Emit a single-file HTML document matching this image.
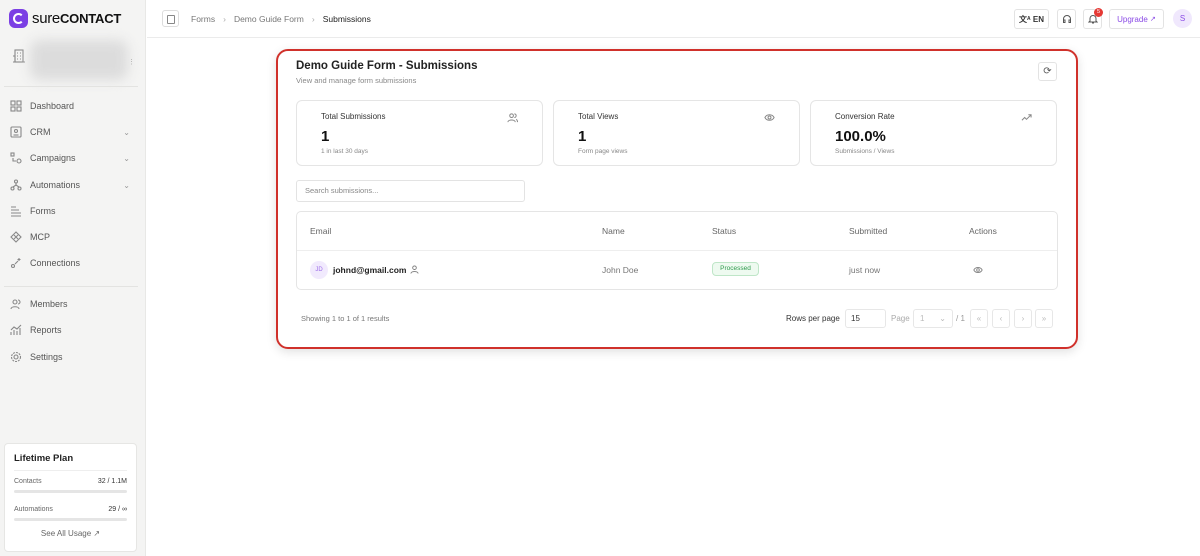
<!DOCTYPE html>
<html><head><meta charset="utf-8">
<style>
*{box-sizing:border-box;margin:0;padding:0}
body{width:1200px;height:556px;overflow:hidden;font-family:"Liberation Sans",sans-serif;background:#fff;color:#111;position:relative}
.sb{position:absolute;left:0;top:0;width:146px;height:556px;background:#f4f4f3;border-right:1px solid #e8e8e6}
.logo{position:absolute;left:9px;top:9px;display:flex;align-items:center}
.logo .c{width:19px;height:19px;border-radius:6px;background:#7b3fe4;position:relative}
.logo .c:after{content:"";position:absolute;left:4px;top:4px;width:7px;height:7px;border:2.5px solid #fff;border-radius:50%;border-right-color:transparent}
.logo .t{font-size:15px;margin-left:4px;letter-spacing:-0.3px;color:#111}
.logo b{font-size:13px;letter-spacing:-0.2px}
.acc{position:absolute;left:12px;top:48px}
.blur{position:absolute;left:30px;top:40px;width:98px;height:40px;background:#dcdcdc;filter:blur(6px);border-radius:10px}
.sep{position:absolute;left:4px;width:134px;border-top:1px solid #e3e3e1}
.nav{position:absolute;left:10px;font-size:9px;color:#555;display:flex;align-items:center;width:120px}
.nav svg{width:12px;height:12px;margin-right:8px;stroke:#888;fill:none;stroke-width:1.1}
.nav .ch{margin-left:auto;color:#999;font-size:8px}
.plan{position:absolute;left:4px;top:443px;width:133px;height:109px;background:#fff;border:1px solid #e6e6e4;border-radius:4px;padding:9px}
.plan h4{font-size:9.5px;font-weight:bold;color:#222;padding-bottom:6px;border-bottom:1px solid #eee}
.row{display:flex;justify-content:space-between;font-size:7px;color:#666;margin-top:7px}
.bar{height:3px;background:#e5e5e5;border-radius:2px;margin-top:5px}
.hdr{position:absolute;left:147px;top:0;right:0;height:38px;border-bottom:1px solid #ebebeb;background:#fff}
.bc{position:absolute;left:15px;top:10px;display:flex;align-items:center;font-size:8.5px;color:#777}
.bc .tog{width:17px;height:17px;border:1px solid #ddd;border-radius:3px;margin-right:12px;position:relative}
.bc .tog:after{content:"";position:absolute;left:4px;top:4px;width:6px;height:7px;border:1px solid #888;border-radius:1px}
.btn{position:absolute;top:9px;height:20px;border:1px solid #e3e3e3;border-radius:3px;background:#fff;font-size:8px;display:flex;align-items:center;justify-content:center}
.red{position:absolute;left:276px;top:49px;width:802px;height:300px;border:2.5px solid #d0312b;border-radius:12px;box-shadow:0 3px 10px rgba(0,0,0,.12)}
.ttl{position:absolute;left:296px;top:60px;font-size:11.5px;font-weight:bold;color:#222}
.sub{position:absolute;left:296px;top:76px;font-size:7.5px;color:#888}
.card{position:absolute;top:100px;width:247px;height:66px;border:1px solid #e5e5e5;border-radius:6px;background:#fff}
.card .l{position:absolute;left:24px;top:11px;font-size:8px;color:#333}
.card .v{position:absolute;left:24px;top:27px;font-size:15px;font-weight:bold;color:#111}
.card .s{position:absolute;left:24px;top:47px;font-size:6.5px;color:#888}
.card svg{position:absolute;right:24px;top:11px;width:11px;height:11px;stroke:#888;fill:none;stroke-width:1.1}
.search{position:absolute;left:296px;top:180px;width:229px;height:22px;border:1px solid #e3e3e3;border-radius:3px;font-size:7.5px;color:#888;padding:5px 8px}
.tbl{position:absolute;left:296px;top:211px;width:762px;height:79px;border:1px solid #e5e5e5;border-radius:5px}
.th{position:absolute;top:14px;font-size:8.5px;color:#666}
.td{position:absolute;top:53px;font-size:8.5px;color:#777}
.hl{position:absolute;left:0;right:0;top:38px;border-top:1px solid #eee}
.pg{position:absolute;top:309px;height:19px;border:1px solid #e7e7e7;border-radius:3px;font-size:8px;color:#bbb;display:flex;align-items:center;justify-content:center}
</style></head><body>
<div class="sb">
 <div class="logo"><div class="c"></div><span class="t">sure<b>CONTACT</b></span></div>
 <svg class="acc" width="14" height="16" viewBox="0 0 14 16" fill="none" stroke="#888" stroke-width="1.1"><rect x="3" y="2" width="8" height="12"/><path d="M1 14h12M1 8h2v6M5 5h1M8 5h1M5 8h1M8 8h1M5 11h1M8 11h1"/></svg>
 <div class="blur"></div>
 <div style="position:absolute;left:128px;top:58px;font-size:7px;color:#aaa">⋮</div>
 <div class="sep" style="top:86px"></div>
 <div class="nav" style="top:100px"><svg viewBox="0 0 12 12"><rect x="1" y="1" width="4" height="4"/><rect x="7" y="1" width="4" height="4"/><rect x="1" y="7" width="4" height="4"/><rect x="7" y="7" width="4" height="4"/></svg>Dashboard</div>
 <div class="nav" style="top:126px"><svg viewBox="0 0 12 12"><rect x="1" y="1" width="10" height="10" rx="1"/><circle cx="6" cy="5" r="1.5"/><path d="M3.5 9h5"/></svg>CRM<span class="ch">⌄</span></div>
 <div class="nav" style="top:152px"><svg viewBox="0 0 12 12"><rect x="1" y="1" width="3" height="3"/><circle cx="9" cy="9" r="2"/><path d="M3 6v3h3"/></svg>Campaigns<span class="ch">⌄</span></div>
 <div class="nav" style="top:179px"><svg viewBox="0 0 12 12"><circle cx="6" cy="2.5" r="1.5"/><circle cx="2.5" cy="9.5" r="1.5"/><circle cx="9.5" cy="9.5" r="1.5"/><path d="M6 4v2M3 8l3-2 3 2"/></svg>Automations<span class="ch">⌄</span></div>
 <div class="nav" style="top:205px"><svg viewBox="0 0 12 12"><path d="M1 2h5M1 5h8M1 8h10M1 11h10"/></svg>Forms</div>
 <div class="nav" style="top:231px"><svg viewBox="0 0 12 12"><path d="M6 1l5 5-5 5-5-5z"/><path d="M4 4l4 4M8 4l-4 4"/></svg>MCP</div>
 <div class="nav" style="top:257px"><svg viewBox="0 0 12 12"><circle cx="3" cy="9" r="1.5"/><path d="M5 7l3-3M9 1v3M7.5 2.5h3"/></svg>Connections</div>
 <div class="sep" style="top:286px"></div>
 <div class="nav" style="top:298px"><svg viewBox="0 0 12 12"><circle cx="5" cy="4" r="2"/><path d="M1 11c0-3 8-3 8 0M8 2a2 2 0 010 4"/></svg>Members</div>
 <div class="nav" style="top:324px"><svg viewBox="0 0 12 12"><path d="M1 11V8M4 11V6M7 11V7M10 11V4M1 6l3-3 3 2 4-4"/></svg>Reports</div>
 <div class="nav" style="top:351px"><svg viewBox="0 0 12 12"><circle cx="6" cy="6" r="2"/><circle cx="6" cy="6" r="4.5" stroke-dasharray="2 1"/></svg>Settings</div>
 <div class="plan"><h4>Lifetime Plan</h4>
  <div class="row"><span>Contacts</span><span style="color:#333">32 / 1.1M</span></div><div class="bar"></div>
  <div class="row" style="margin-top:13px"><span>Automations</span><span style="color:#333">29 / ∞</span></div><div class="bar"></div>
  <div style="text-align:center;font-size:8px;color:#666;margin-top:8px">See All Usage ↗</div></div>
</div>
<div class="hdr">
 <div class="bc"><div class="tog"></div>Forms<span style="margin:0 8px;color:#aaa">›</span>Demo Guide Form<span style="margin:0 8px;color:#aaa">›</span><span style="color:#222">Submissions</span></div>
</div>
<div class="btn" style="left:1014px;width:35px;font-weight:bold;color:#333">文<sub style="font-size:5px">A</sub>&nbsp;EN</div>
<div class="btn" style="left:1057px;width:19px;color:#555"><svg width="10" height="10" viewBox="0 0 10 10" fill="none" stroke="#555"><path d="M1.5 7V5a3.5 3.5 0 017 0v2M1.5 6h1.5v2.5H1.5zM7 6h1.5v2.5H7z"/></svg></div>
<div class="btn" style="left:1083px;width:19px"><svg width="10" height="10" viewBox="0 0 10 10" fill="none" stroke="#555"><path d="M2 7V4.5a3 3 0 016 0V7l1 1H1zM4 9h2"/></svg></div>
<div style="position:absolute;left:1094px;top:8px;width:9px;height:9px;border-radius:50%;background:#e53935;color:#fff;font-size:5.5px;text-align:center;line-height:9px">5</div>
<div class="btn" style="left:1109px;width:55px;color:#8b4be6">Upgrade&nbsp;<span style="font-size:7px">↗</span></div>
<div style="position:absolute;left:1173px;top:9px;width:19px;height:19px;border-radius:50%;background:#f0e8fd;color:#8b4be6;font-size:8px;text-align:center;line-height:19px">S</div>

<div class="red"></div>
<div class="ttl">Demo Guide Form - Submissions</div>
<div class="sub">View and manage form submissions</div>
<div class="btn" style="left:1038px;top:62px;width:19px;height:19px;font-size:10px;color:#555">⟳</div>

<div class="card" style="left:296px"><div class="l">Total Submissions</div><div class="v">1</div><div class="s">1 in last 30 days</div><svg viewBox="0 0 12 12"><circle cx="5" cy="4" r="2"/><path d="M1 11c0-3 8-3 8 0M8 2a2 2 0 010 4M10 8c1 .5 1.5 1.5 1.5 3"/></svg></div>
<div class="card" style="left:553px"><div class="l">Total Views</div><div class="v">1</div><div class="s">Form page views</div><svg viewBox="0 0 12 12"><path d="M1 6c2-4 8-4 10 0-2 4-8 4-10 0z"/><circle cx="6" cy="6" r="1.6"/></svg></div>
<div class="card" style="left:810px"><div class="l">Conversion Rate</div><div class="v">100.0%</div><div class="s">Submissions / Views</div><svg viewBox="0 0 12 12"><path d="M1 9l3-3 2 2 5-5M8 3h3v3"/></svg></div>

<div class="search">Search submissions...</div>
<div class="tbl">
 <div class="th" style="left:13px">Email</div><div class="th" style="left:305px">Name</div><div class="th" style="left:415px">Status</div><div class="th" style="left:552px">Submitted</div><div class="th" style="left:672px">Actions</div>
 <div class="hl"></div>
 <div style="position:absolute;left:13px;top:49px;width:18px;height:18px;border-radius:50%;background:#f1eafd;color:#9b6be8;font-size:6px;text-align:center;line-height:18px">JD</div>
 <div class="td" style="left:36px;color:#222;font-weight:bold">johnd@gmail.com</div>
 <svg style="position:absolute;left:113px;top:53px" width="9" height="9" viewBox="0 0 10 10" fill="none" stroke="#777"><circle cx="5" cy="3" r="2"/><path d="M1 9.5c0-3 8-3 8 0"/></svg>
 <div class="td" style="left:305px">John Doe</div>
 <div style="position:absolute;left:415px;top:50px;width:47px;height:14px;border:1px solid #bfe6c8;background:#eefaf0;border-radius:4px;color:#2e9a4c;font-size:6.5px;text-align:center;line-height:12px">Processed</div>
 <div class="td" style="left:552px">just now</div>
 <svg style="position:absolute;left:676px;top:53px" width="10" height="10" viewBox="0 0 12 12" fill="none" stroke="#888" stroke-width="1.1"><path d="M1 6c2-4 8-4 10 0-2 4-8 4-10 0z"/><circle cx="6" cy="6" r="1.6"/></svg>
</div>
<div style="position:absolute;left:301px;top:314px;font-size:7.5px;color:#777">Showing 1 to 1 of 1 results</div>
<div style="position:absolute;left:786px;top:314px;font-size:8px;color:#333">Rows per page</div>
<div class="pg" style="left:845px;width:41px;justify-content:flex-start;padding-left:5px;color:#333">15</div>
<div style="position:absolute;left:891px;top:314px;font-size:8px;color:#aaa">Page</div>
<div class="pg" style="left:913px;width:40px;justify-content:space-between;padding:0 6px">1<span>⌄</span></div>
<div style="position:absolute;left:956px;top:314px;font-size:8px;color:#999">/ 1</div>
<div class="pg" style="left:970px;width:18px">«</div>
<div class="pg" style="left:992px;width:18px">‹</div>
<div class="pg" style="left:1014px;width:18px">›</div>
<div class="pg" style="left:1035px;width:18px">»</div>
</body></html>
